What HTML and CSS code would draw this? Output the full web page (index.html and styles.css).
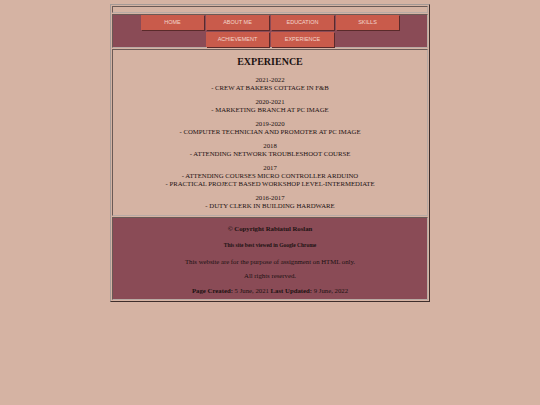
FILE: index.html
```html
<!DOCTYPE html>
<html>
<head>
<meta charset="utf-8">
<title>Experience</title>
<link rel="stylesheet" href="styles.css">
</head>
<body>
<div class="frame">
  <div class="cell top-row"></div>
  <div class="cell nav">
    <a class="btn" href="#">HOME</a>
    <a class="btn" href="#">ABOUT ME</a>
    <a class="btn" href="#">EDUCATION</a>
    <a class="btn" href="#">SKILLS</a>
    <a class="btn" href="#">ACHIEVEMENT</a>
    <a class="btn" href="#">EXPERIENCE</a>
  </div>
  <div class="cell content">
    <h1 class="title">EXPERIENCE</h1>
    <p class="item">2021-2022<br>- CREW AT BAKERS COTTAGE IN F&amp;B</p>
    <p class="item">2020-2021<br>- MARKETING BRANCH AT PC IMAGE</p>
    <p class="item">2019-2020<br>- COMPUTER TECHNICIAN AND PROMOTER AT PC IMAGE</p>
    <p class="item">2018<br>- ATTENDING NETWORK TROUBLESHOOT COURSE</p>
    <p class="item">2017<br>- ATTENDING COURSES MICRO CONTROLLER ARDUINO<br>- PRACTICAL PROJECT BASED WORKSHOP LEVEL-INTERMEDIATE</p>
    <p class="item">2016-2017<br>- DUTY CLERK IN BUILDING HARDWARE</p>
  </div>
  <div class="cell footer">
    <p class="copy">© Copyright Rabiatul Roslan</p>
    <p class="best">This site best viewed in Google Chrome</p>
    <p class="note">This website are for the purpose of assignment on HTML only.</p>
    <p class="note rights">All rights reserved.</p>
    <p class="note dates"><b>Page Created:</b> 5 June, 2021 <b>Last Updated:</b> 9 June, 2022</p>
  </div>
</div>
</body>
</html>
```
FILE: styles.css
```css
html, body {
  margin: 0;
  padding: 0;
  background: #d5b3a3;
}
body {
  padding-top: 4px;
  font-family: "Liberation Serif", "Times New Roman", serif;
  color: #1c1212;
}
.frame {
  width: 316px;
  margin: 0 auto;
  border: 1px solid;
  border-color: #a49a96 #3e2e2c #3e2e2c #a49a96;
  padding: 1px;
  display: flex;
  flex-direction: column;
  gap: 1px;
}
.cell {
  border: 1px solid;
  border-color: #6a5a56 #b8aaa4 #b8aaa4 #6a5a56;
}
.top-row {
  height: 5px;
}
.nav {
  background: #8a4b56;
  display: flex;
  flex-wrap: wrap;
  justify-content: center;
  gap: 2px;
  padding: 0;
}
.btn {
  display: block;
  width: 63px;
  height: 15px;
  line-height: 15px;
  background: #c95b4b;
  box-shadow: 1px 1px 0 #5a2a2a;
  color: #f3d6cc;
  font-family: "Liberation Sans", Arial, sans-serif;
  font-size: 5.5px;
  text-align: center;
  text-decoration: none;
}
.content {
  padding: 6px 0 5px;
  text-align: center;
}
.title {
  margin: 0 0 8px;
  font-size: 10px;
  line-height: 12px;
  font-weight: bold;
}
.item {
  margin: 0 0 6px;
  font-size: 6.75px;
  line-height: 8px;
}
.item:last-child {
  margin-bottom: 0;
}
.footer {
  background: #8a4b56;
  text-align: center;
  padding: 6px 0 4px;
}
.footer p {
  margin: 0;
}
.copy {
  font-size: 6.75px;
  line-height: 9px;
  font-weight: bold;
}
.best {
  margin-top: 9px !important;
  font-size: 5.5px;
  line-height: 6px;
  font-weight: bold;
}
.note {
  font-size: 6.75px;
  line-height: 9px;
  margin-top: 9px !important;
}
.rights {
  margin-top: 5px !important;
}
.dates {
  margin-top: 6px !important;
}
```
